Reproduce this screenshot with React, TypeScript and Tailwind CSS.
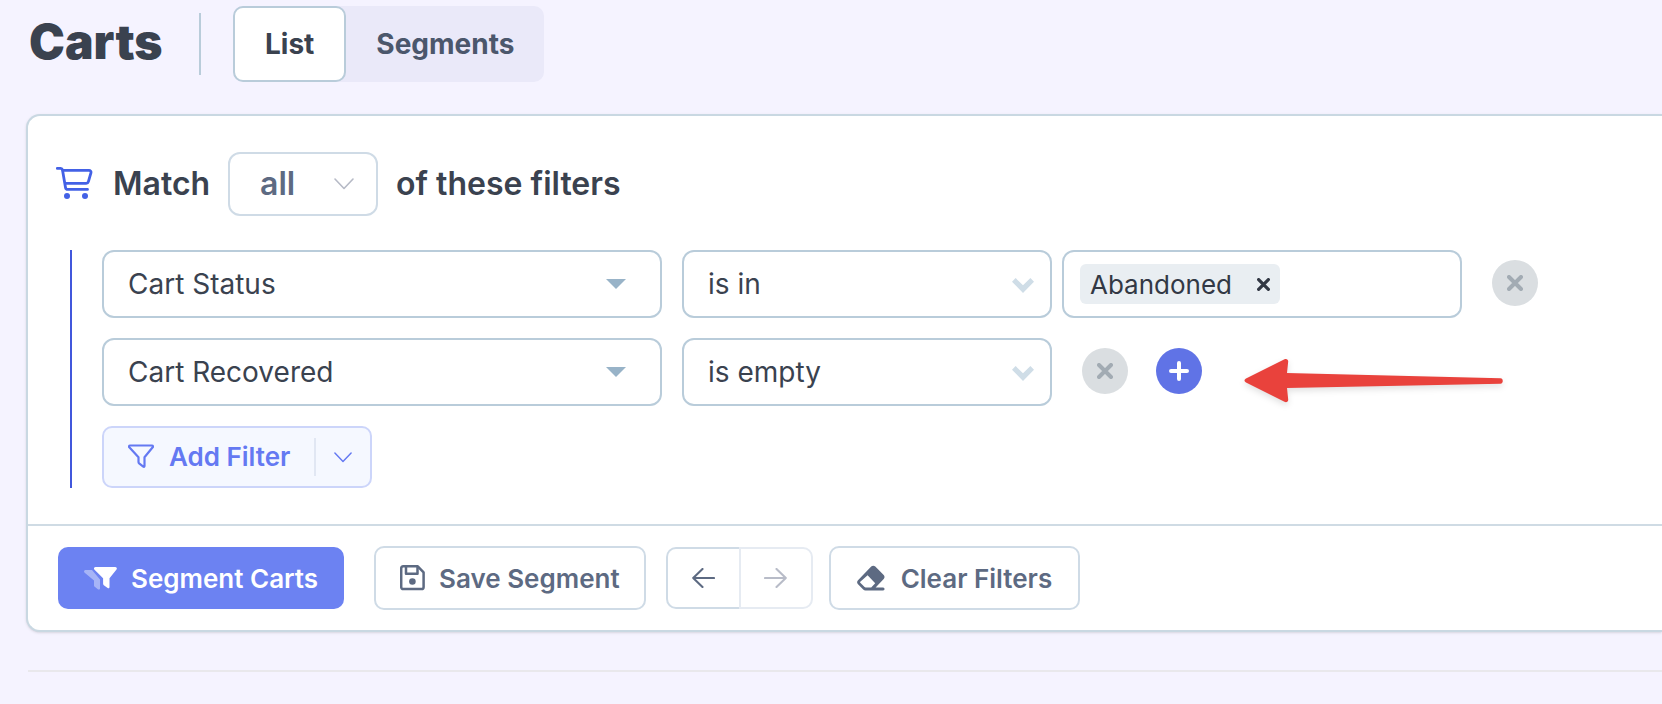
import React from "react";

type SelectFieldProps = {
  label: string;
  options: string[];
  className: string;
  children: React.ReactNode;
};

const CartIcon = () => (
  <svg width="38" height="36" viewBox="0 0 38 36" fill="none" stroke="#4361e6" strokeWidth="2.8" strokeLinecap="round" strokeLinejoin="round" aria-hidden="true">
    <path d="M2.300 2.400h3.400c.9 0 1.600.6 1.800 1.500l3 17.500c.2 1.200 1.100 2 2.300 2h19.700" />
    <path d="M8 4.400h26c1.400 0 2.300 1 2 2.300l-2.600 9c-.3 1-1.100 1.700-2.200 1.700H10.500" />
    <circle cx="12" cy="30" r="3" fill="#4361e6" stroke="none" />
    <circle cx="30" cy="30" r="3" fill="#4361e6" stroke="none" />
  </svg>
);

const ThinChevron = ({ className }: { className: string }) => (
  <svg className={className} viewBox="0 0 20 12" fill="none" stroke="currentColor" strokeWidth="1.6" strokeLinecap="round" strokeLinejoin="round" aria-hidden="true">
    <path d="M1 1l9 9.500L19 1" />
  </svg>
);

const Caret = () => (
  <svg width="20" height="10" viewBox="0 0 20 10" fill="#98b3c8" aria-hidden="true">
    <path d="M0 0h20L10 10z" />
  </svg>
);

const BoldChevron = () => (
  <svg width="22" height="15" viewBox="0 0 22 15" fill="#cfdde7" aria-hidden="true">
    <path d="M3.600 0 11 7.300 18.400 0 22 3.700 11 15 0 3.700z" />
  </svg>
);

const FunnelIcon = () => (
  <svg width="26" height="24" viewBox="0 0 26 24" fill="none" stroke="currentColor" strokeWidth="2.2" strokeLinecap="round" strokeLinejoin="round" aria-hidden="true">
    <path d="M2 1.500h22c1 0 1.300 1 .7 1.700l-8.200 10V22c0 .7-.6 1-1.200.600l-4.200-3.300c-.4-.3-.6-.7-.6-1.200v-4.900L1.300 3.200C.7 2.500 1 1.500 2 1.500z" />
  </svg>
);

const FilterStackIcon = () => (
  <svg width="33" height="24" viewBox="0 0 33 24" fill="#fff" aria-hidden="true">
    <path opacity=".4" d="M1.600 4h6.400l8 9.500v9c0 1-1 1.400-1.800.9l-3.500-2.600c-.5-.4-.7-.8-.7-1.400v-4.900L.4 6.400C-.4 5.400.3 4 1.600 4z" />
    <path d="M11.500 1h19.800c1.400 0 2 1.500 1.200 2.500L25.500 12.300v8.800c0 1-1 1.600-1.800 1l-3.900-2.900c-.4-.3-.7-.8-.7-1.400v-5.500L10.300 3.500C9.500 2.500 10.200 1 11.500 1z" />
  </svg>
);

const SaveIcon = () => (
  <svg width="25" height="26" viewBox="0 0 25 26" fill="none" stroke="currentColor" strokeWidth="2.5" strokeLinejoin="round" aria-hidden="true">
    <path d="M3.200 1.300h14.600l5.800 6v14.700c0 1.200-.9 2.100-2.100 2.100H3.300c-1.200 0-2.100-.9-2.100-2.100V3.400c0-1.200.8-2.100 2-2.100z" />
    <path d="M6 1.600V8.800h11.500V1.600" />
    <circle cx="12.400" cy="16.500" r="3.300" fill="currentColor" stroke="none" />
  </svg>
);

const EraserIcon = () => (
  <svg width="28" height="26" viewBox="0 0 28 26" fill="currentColor" fillRule="evenodd" aria-hidden="true">
    <path d="M14.200 1.600c1.200-1.200 2.900-1.200 4.100 0l8.400 8.300c1.100 1.200 1.100 2.900 0 4.100L18.600 22.500h7.500c1.900 0 1.900 3 0 3H8.500c-.9 0-1.700-.4-2.300-1L1 19.300c-1.200-1.200-1.200-2.900 0-4.100zM10.600 10.200l-7.300 6.500c-.3.300-.3.700 0 1L7.600 22c.3.300.6.500 1 .5h5.600l4-4.200z" />
  </svg>
);

const ArrowIcon = ({ className }: { className?: string }) => (
  <svg className={className} width="23" height="20" viewBox="0 0 23 20" fill="none" stroke="currentColor" strokeWidth="2.1" strokeLinecap="round" strokeLinejoin="round" aria-hidden="true">
    <path d="M22 10H1.200M10.500 1 1.200 10l9.300 9" />
  </svg>
);

const CloseIcon = ({ size }: { size: number }) => (
  <svg width={size} height={size} viewBox="0 0 16 16" fill="none" stroke="currentColor" strokeWidth="4" strokeLinecap="round" aria-hidden="true">
    <path d="M2 2l12 12M14 2 2 14" />
  </svg>
);

const PlusIcon = () => (
  <svg width="20" height="20" viewBox="0 0 20 20" fill="none" stroke="currentColor" strokeWidth="4" strokeLinecap="round" aria-hidden="true">
    <path d="M10 2v16M2 10h16" />
  </svg>
);

const RedArrow = () => (
  <svg className="drop-shadow-md" width="262" height="46" viewBox="0 0 262 46" fill="#e9423c" aria-hidden="true">
    <path d="M4 20.500 42.500 1.300c2-1 3.900.2 3.700 2.300L45 15l213.500 5.300c3 .1 3 5.300 0 5.400L45 30l1.200 11.500c.2 2.100-1.700 3.300-3.700 2.300L4 24.500c-2-1-2-3 0-4z" />
  </svg>
);

const SelectField = ({ label, options, className, children }: SelectFieldProps) => (
  <div className="relative flex items-center">
    <select
      aria-label={label}
      className={`h-[68px] appearance-none rounded-xl border-2 border-[#b9ccda] bg-white pr-16 pl-6 text-[28px] text-[#3a424f] ${className}`}
    >
      {options.map((option) => (
        <option key={option}>{option}</option>
      ))}
    </select>
    {children}
  </div>
);

const FieldSelect = ({ options }: { options: string[] }) => (
  <SelectField label="Field" options={options} className="w-[560px]">
    <span className="pointer-events-none absolute right-9">
      <Caret />
    </span>
  </SelectField>
);

const OperatorSelect = ({ options }: { options: string[] }) => (
  <SelectField label="Operator" options={options} className="w-[370px]">
    <span className="pointer-events-none absolute right-[18px] pt-0.5">
      <BoldChevron />
    </span>
  </SelectField>
);

const RemoveButton = () => (
  <button
    type="button"
    aria-label="Remove filter"
    className="mb-0.5 ml-[30px] flex size-[46px] items-center justify-center rounded-full bg-[#dadee1] text-[#a2abb3]"
  >
    <CloseIcon size={16} />
  </button>
);

const Header = () => (
  <header className="flex h-[76px] items-center">
    <h1 className="min-w-[138px] pb-1 text-[48px] leading-none font-black text-[#3a424f]">Carts</h1>
    <div className="ml-8 h-[62px] w-0.5 bg-[#b9ccda]" />
    <nav className="ml-8 flex h-full rounded-[10px] bg-[#eae9f9] text-[28px] font-bold">
      <button type="button" className="rounded-[10px] border-2 border-[#b9ccda] bg-white px-[30px] text-[#3a424f]">
        List
      </button>
      <button type="button" className="px-[30px] text-[#4b576c]">
        Segments
      </button>
    </nav>
  </header>
);

const MatchRow = () => (
  <div className="flex items-center text-[32px] font-semibold text-[#3a424f]">
    <CartIcon />
    <label htmlFor="match" className="ml-5">
      Match
    </label>
    <div className="relative ml-[18px] flex items-center">
      <select
        id="match"
        className="h-16 w-[150px] appearance-none rounded-xl border-2 border-[#cfdbe6] bg-white pl-[30px] font-semibold text-[#5d6a82]"
      >
        <option>all</option>
        <option>any</option>
      </select>
      <ThinChevron className="pointer-events-none absolute right-6 h-3 w-5 text-[#b6bac6]" />
    </div>
    <span className="ml-[18px]">of these filters</span>
  </div>
);

const FilterRows = () => (
  <div className="mt-[34px] ml-[15px] flex flex-col gap-5 border-l-2 border-[#4157dc] pl-[30px]">
    <div className="flex items-center">
      <FieldSelect options={["Cart Status", "Cart Recovered"]} />
      <div className="ml-5 flex items-center gap-[10px]">
        <OperatorSelect options={["is in", "is empty"]} />
        <div className="flex h-[68px] w-[400px] items-center rounded-xl border-2 border-[#b9ccda] px-4">
          <span className="flex h-10 w-[200px] shrink-0 items-center justify-between rounded-md bg-[#e9eef2] px-[10px] text-[26px] text-[#323844]">
            Abandoned
            <button type="button" aria-label="Remove Abandoned">
              <CloseIcon size={13} />
            </button>
          </span>
          <input type="text" aria-label="Add a value" className="h-10 min-w-0 flex-1 px-2 text-[26px] outline-none" />
        </div>
      </div>
      <RemoveButton />
    </div>

    <div className="flex items-center">
      <FieldSelect options={["Cart Recovered", "Cart Status"]} />
      <div className="ml-5">
        <OperatorSelect options={["is empty", "is in"]} />
      </div>
      <RemoveButton />
      <button
        type="button"
        aria-label="Add another filter"
        className="mr-10 mb-0.5 ml-7 flex size-[46px] items-center justify-center rounded-full bg-[#6073e6] text-white"
      >
        <PlusIcon />
      </button>
      <div className="pt-[18px]">
        <RedArrow />
      </div>
    </div>

    <div className="flex h-[62px] items-center self-start rounded-[10px] border-2 border-[#ccd5fa] bg-[#f5f8ff] text-[#6479f2]">
      <button type="button" className="flex items-center gap-[15px] px-6 pb-0.5 text-[26px] font-semibold">
        <FunnelIcon />
        Add Filter
      </button>
      <button type="button" aria-label="More filter options" className="flex h-[38px] w-14 items-center justify-center border-l-2 border-[#e1e7f3]">
        <ThinChevron className="h-[11px] w-[18px]" />
      </button>
    </div>
  </div>
);

const Actions = () => (
  <div className="flex items-center border-t-2 border-[#cfdbe4] py-5 pl-[30px] text-[26px] font-semibold text-[#5d6a82]">
    <button type="button" className="flex h-[62px] items-center gap-[14px] rounded-[10px] bg-[#6c82f2] px-[26px] text-white">
      <FilterStackIcon />
      Segment Carts
    </button>
    <button type="button" className="ml-[30px] flex h-16 items-center gap-[14px] rounded-[10px] border-2 border-[#cfdbe6] px-6">
      <SaveIcon />
      Save Segment
    </button>
    <div className="ml-5 flex h-[62px]">
      <button type="button" aria-label="Undo" className="flex w-[73px] items-center justify-center rounded-l-[10px] border-y-2 border-l-2 border-[#cfdbe6]">
        <ArrowIcon />
      </button>
      <button type="button" aria-label="Redo" disabled className="flex w-[74px] items-center justify-center rounded-r-[10px] border-2 border-[#e6ebf2] text-[#b8bcc8]">
        <ArrowIcon className="rotate-180" />
      </button>
    </div>
    <button type="button" className="ml-4 flex h-16 items-center gap-4 rounded-[10px] border-2 border-[#cfdbe6] px-[26px]">
      <EraserIcon />
      Clear Filters
    </button>
  </div>
);

const App: React.FC = () => {
  return (
    <main className="min-h-screen overflow-hidden bg-[#f5f3ff] pt-1.5 pl-[26px] font-['Inter',sans-serif]">
      <div className="pl-[3px]">
        <Header />
      </div>
      <section className="mt-8 rounded-l-[14px] border-y-2 border-l-2 border-[#c9d8e2] bg-white shadow-sm">
        <div className="py-9 pl-[27px]">
          <MatchRow />
          <FilterRows />
        </div>
        <Actions />
      </section>
      <hr className="mt-[38px] ml-0.5 border-t-2 border-[#e9e8ec]" />
    </main>
  );
};

export default App;
